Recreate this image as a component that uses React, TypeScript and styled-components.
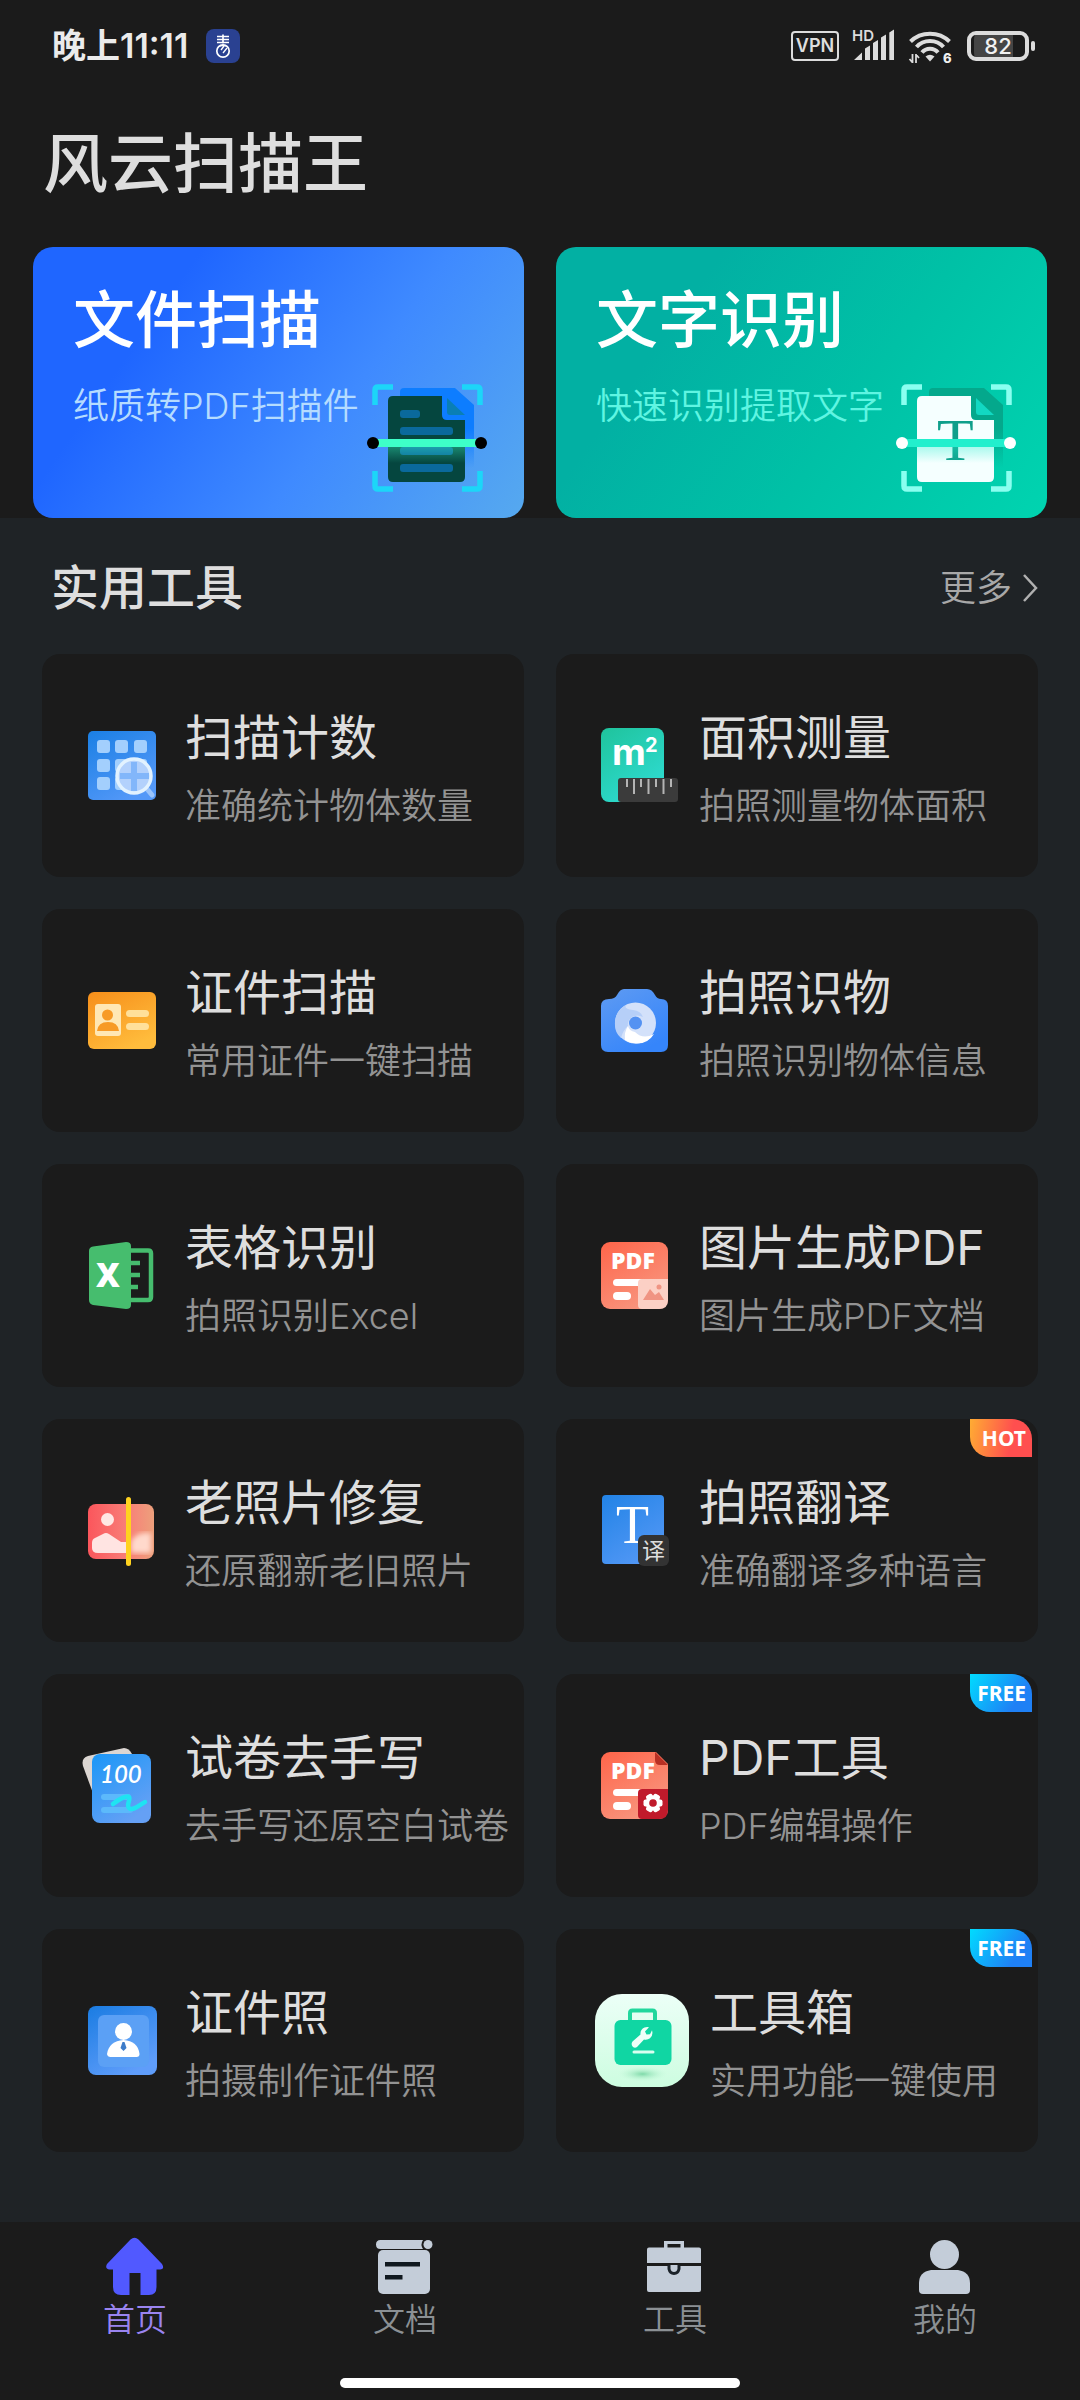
import React from "react";
import styled, { createGlobalStyle } from "styled-components";

const GlobalStyle = createGlobalStyle`
  *, *::before, *::after { box-sizing: border-box; }
  body {
    margin: 0;
    background: #1b1b1b;
    color: #dedede;
    font-family: Inter, "Noto Sans CJK SC", sans-serif;
  }
  a { color: inherit; text-decoration: none; }
  h1, h2, h3, p { margin: 0; font-weight: 400; }
  svg { display: block; flex: none; }
`;

const Page = styled.div`
  display: flex;
  flex-direction: column;
  min-height: 100vh;
`;

/* ---------- status bar ---------- */

const StatusBar = styled.div`
  display: flex;
  align-items: center;
  justify-content: space-between;
  height: 92px;
  padding: 0 45px 0 52px;
`;

const StatusGroup = styled.div<{ $gap: number }>`
  display: flex;
  align-items: center;
  gap: ${(p) => p.$gap}px;
`;

const Clock = styled.span`
  font-size: 34px;
  line-height: 48px;
  font-weight: 600;
  color: #ebebeb;
`;

const VpnTag = styled.span`
  width: 48px;
  height: 30px;
  border: 2px solid #dcdcdc;
  border-radius: 4px;
  font-size: 18px;
  line-height: 26px;
  font-weight: 600;
  text-align: center;
`;

const Battery = styled.span`
  display: flex;
  align-items: center;
  gap: 2px;

  &::after {
    content: "";
    width: 4px;
    height: 10px;
    border-radius: 2px;
    background: #dcdcdc;
  }
`;

const BatteryBody = styled.span`
  width: 62px;
  height: 30px;
  border: 4px solid #dcdcdc;
  border-radius: 9px;
  padding: 0 3px;
  background: linear-gradient(90deg, #454545 82%, #1b1b1b 82%) content-box;
  font-size: 22px;
  line-height: 22px;
  font-weight: 500;
  color: #f2f2f2;
  text-align: center;
`;

/* ---------- header ---------- */

const AppTitle = styled.h1`
  padding: 24px 43px 0;
  font-size: 65px;
  line-height: 96px;
  font-weight: 500;
`;

const HeroRow = styled.div`
  display: grid;
  grid-template-columns: 1fr 1fr;
  gap: 32px;
  padding: 35px 33px 0;
`;

const HeroCard = styled.a<{ $bg: string }>`
  display: grid;
  grid-template-columns: 1fr auto;
  align-content: start;
  height: 271px;
  padding: 28px 30px 26px 40px;
  border-radius: 20px;
  background: ${(p) => p.$bg};
`;

const HeroTitle = styled.h2`
  grid-column: 1 / -1;
  font-size: 62px;
  line-height: 92px;
  font-weight: 500;
  color: #fff;
`;

const HeroSub = styled.p<{ $color: string }>`
  padding-top: 12px;
  font-size: 36px;
  line-height: 54px;
  font-weight: 350;
  white-space: nowrap;
  color: ${(p) => p.$color};
`;

const HeroArt = styled.span`
  padding-top: 17px;
`;

/* ---------- tools ---------- */

const Main = styled.main`
  flex: 1;
  padding: 0 42px 70px;
  background: #1f2326;
`;

const SectionHead = styled.div`
  display: flex;
  align-items: center;
  justify-content: space-between;
  height: 136px;
  padding: 3px 0 0 9px;
`;

const SectionTitle = styled.h2`
  font-size: 48px;
  line-height: 72px;
  font-weight: 500;
`;

const More = styled.a`
  display: flex;
  align-items: center;
  gap: 10px;
  font-size: 36px;
  line-height: 48px;
  font-weight: 350;
  color: #a8a8a8;
`;

const ToolGrid = styled.div`
  display: grid;
  grid-template-columns: 1fr 1fr;
  gap: 32px;
`;

const ToolCard = styled.a<{ $wide?: boolean }>`
  position: relative;
  display: flex;
  align-items: center;
  gap: ${(p) => (p.$wide ? 21 : 10)}px;
  height: 223px;
  padding-left: 38px;
  border-radius: 18px;
  background: #1b1b1b;
  white-space: nowrap;
`;

const ToolText = styled.div`
  display: flex;
  flex-direction: column;
  gap: 8px;
`;

const ToolTitle = styled.h3`
  font-size: 48px;
  line-height: 72px;
`;

const ToolSub = styled.p`
  font-size: 36px;
  line-height: 48px;
  font-weight: 350;
  color: #939393;
`;

const Badge = styled.span<{ $bg: string }>`
  position: absolute;
  top: 0;
  right: 6px;
  width: 62px;
  height: 38px;
  padding-right: 6px;
  border-radius: 0 20px 0 20px;
  background: ${(p) => p.$bg};
  font-family: "Noto Sans", sans-serif;
  font-size: 21px;
  line-height: 38px;
  font-weight: 700;
  text-align: right;
  color: #fff;
`;

/* ---------- bottom navigation ---------- */

const BottomBar = styled.footer`
  display: flex;
  flex-direction: column;
  align-items: center;
  padding: 14px 0 12px;
`;

const TabRow = styled.nav`
  display: grid;
  grid-template-columns: repeat(4, 1fr);
  width: 100%;
`;

const Tab = styled.a<{ $active?: boolean }>`
  display: flex;
  flex-direction: column;
  align-items: center;
  font-size: 32px;
  line-height: 48px;
  font-weight: 350;
  color: ${(p) => (p.$active ? "#9a84f0" : "#8b9094")};
`;

const HomeIndicator = styled.span`
  width: 400px;
  height: 10px;
  margin-top: 34px;
  border-radius: 5px;
  background: #fff;
`;

/* ---------- status icons ---------- */

const AppBadgeIcon = () => (
  <svg width="34" height="34" viewBox="0 0 34 34">
    <rect width="34" height="34" rx="8" fill="#2a4191" />
    <g stroke="#fff" fill="none">
      <path d="M11 7.5h12M11 10.5h12M11 13.5h12M17 5.5v9" strokeWidth="1.7" />
      <circle cx="17" cy="22" r="6.2" strokeWidth="1.7" />
      <path d="M15 21l3-4M17 24l4-5M14 17c3-1 4-1 6 0" strokeWidth="1.3" />
    </g>
  </svg>
);

const SignalIcon = () => (
  <svg width="43" height="46" viewBox="0 -5 43 46" fill="#dcdcdc">
    <text x="0" y="13" fontSize="15" fontWeight="600" fontFamily="Inter, sans-serif">HD</text>
    <path d="M2 32l8-7.500V32zM13 20.500l5-3V32h-5zM21 15l5-3V32h-5zM29 9.500l5-3V32h-5zM37.300 4.500l4.700-3V32h-4.700z" />
  </svg>
);

const WifiIcon = () => (
  <svg width="46" height="46" viewBox="0 -5 46 46">
    <g fill="none" stroke="#dcdcdc" strokeWidth="4">
      <path d="M2.500 13.500C13 3 31 3 41.500 13.500" />
      <path d="M8.500 19C15.500 11 28.500 11 35.500 19" />
      <path d="M14 24.500C18 19.500 26 19.500 30 24.500" />
    </g>
    <path d="M17.500 28.500Q22 25 26.500 28.500L22 33.500z" fill="#dcdcdc" />
    <path d="M4.500 26v9M4.500 34.500L1.500 31M8 35v-9M8 26.500l3 3.500" stroke="#dcdcdc" strokeWidth="1.800" fill="none" />
    <text x="35" y="35" fontSize="13" fontWeight="800" fill="#f0f0f0" fontFamily="Inter, sans-serif">6</text>
  </svg>
);

/* ---------- hero art ---------- */

type ArtProps = {
  id: string;
  shift: number;
  corner: string;
  shadow: string;
  page: string;
  fold: string;
  beam: string;
  dot: string;
  children: React.ReactNode;
};

const ScanArt = ({ id, shift, corner, shadow, page, fold, beam, dot, children }: ArtProps) => (
  <svg width="127" height="109" viewBox="0 0 127 109">
    <defs>
      <linearGradient id={`${id}-shadow`} x1="0" y1="0" x2="0" y2="1">
        <stop offset="0.5" stopColor={shadow} />
        <stop offset="1" stopColor={shadow} stopOpacity="0" />
      </linearGradient>
      <linearGradient id={`${id}-glow`} x1="0" y1="0" x2="0" y2="1">
        <stop offset="0" stopColor={beam} stopOpacity="0.35" />
        <stop offset="1" stopColor={beam} stopOpacity="0" />
      </linearGradient>
    </defs>
    <g transform={`translate(${shift} 0)`}>
      <path
        d="M8 21V6q0-3 3-3h15M95 3h15q3 0 3 3v15M8 87v15q0 3 3 3h15M95 105h15q3 0 3-3V87"
        fill="none"
        stroke={corner}
        strokeWidth="5.500"
      />
      <path d="M37 4H88L107 21V84H33V8q0-4 4-4z" fill={`url(#${id}-shadow)`} />
      <path d="M26 12H75V31q0 5 5 5H98V93q0 5-5 5H26q-5 0-5-5V17q0-5 5-5z" fill={page} />
      <path d="M80 14V28q0 3 3 3H98z" fill={fold} />
      {children}
      <rect x="21" y="63" width="77" height="16" fill={`url(#${id}-glow)`} />
      <rect x="8" y="55" width="104" height="8" fill={beam} />
      <circle cx="6" cy="59" r="6" fill={dot} />
      <circle cx="114" cy="59" r="6" fill={dot} />
    </g>
  </svg>
);

/* ---------- tool icons ---------- */

const Grad = ({ id, from, to }: { id: string; from: string; to: string }) => (
  <linearGradient id={id} x1="0" y1="0" x2="0.6" y2="1">
    <stop offset="0" stopColor={from} />
    <stop offset="1" stopColor={to} />
  </linearGradient>
);

const Icon = ({ children }: { children: React.ReactNode }) => (
  <svg width="95" height="95" viewBox="0 0 95 95" aria-hidden="true">
    {children}
  </svg>
);

const CountIcon = () => (
  <Icon>
    <Grad id="count" from="#1a7fe4" to="#5398f8" />
    <rect x="8" y="13" width="68" height="69" rx="5" fill="url(#count)" />
    <g fill="#a3cffd">
      {[22, 41, 59].map((y) =>
        [17, 35, 54].map((x) => <rect key={`${x}-${y}`} x={x} y={y} width="13" height="13" rx="3" />)
      )}
    </g>
    <path d="M67 71l5 6" stroke="#9ac4fb" strokeWidth="5" strokeLinecap="round" />
    <circle cx="54" cy="58" r="17" fill="#b3d1fc" stroke="#e2f2ff" strokeWidth="3.500" />
    <path d="M51 44h6v11h12v6H57v12h-6V61H40v-6h11z" fill="#82b6fa" />
  </Icon>
);

const AreaIcon = () => (
  <Icon>
    <Grad id="area" from="#1fc39c" to="#2edbd0" />
    <rect x="7" y="10" width="63" height="74" rx="8" fill="url(#area)" />
    <text x="18" y="47" fontSize="37" fontWeight="700" fill="#fff" fontFamily="Inter, sans-serif">m</text>
    <text x="51" y="34" fontSize="20" fontWeight="700" fill="#fff" fontFamily="Inter, sans-serif">2</text>
    <rect x="24" y="60" width="60" height="24" rx="3" fill="#3b3b3b" />
    <path
      d="M33 61v8M40 61v15M47 61v8M54.500 61v15M62 61v8M69.500 61v15M77 61v8"
      stroke="#b4b4b4"
      strokeWidth="2"
    />
  </Icon>
);

const IdCardIcon = () => (
  <Icon>
    <Grad id="idcard" from="#f68e1a" to="#ffbc3c" />
    <rect x="8" y="19" width="68" height="57" rx="6" fill="url(#idcard)" />
    <rect x="15" y="31" width="26" height="32" rx="3" fill="#ffe7b4" />
    <circle cx="27.500" cy="42" r="5.500" fill="#f79a26" />
    <path d="M17 58q1-9 11-9t11 9z" fill="#f79a26" />
    <rect x="46" y="37" width="23" height="7" rx="3.500" fill="#ffe09a" />
    <rect x="46" y="50" width="23" height="7" rx="3.500" fill="#ffe09a" />
  </Icon>
);

const CameraIcon = () => (
  <Icon>
    <Grad id="camera" from="#5f9bf2" to="#3585fb" />
    <path
      d="M15 26q6 0 8-4 3-6 7-6h23q5 0 8 6 2 4 6 4 7 0 7 7v39q0 7-7 7H14q-7 0-7-7V33q0-7 8-7z"
      fill="url(#camera)"
    />
    <circle cx="41.500" cy="50" r="20.500" fill="#d3e1fa" />
    <path d="M21 52A20.500 20.500 0 0 1 33 31.500q-5 4 6 5.500 8 1 10 7-6-3-11 0-5 4-4 9-5 4-7 12Q21 60 21 52z" fill="#b6cff8" />
    <path d="M34 53q1 5 7 6 8 8 19 2-6 10-18 9.500-7-.5-11-3.500-1-8 3-14z" fill="#fff" />
    <circle cx="41.500" cy="50" r="6.500" fill="#5492f2" />
  </Icon>
);

const ExcelIcon = () => (
  <Icon>
    <path d="M50 22.500H68q3 0 3 3V69q0 3-3 3H50" fill="none" stroke="#46bd6e" strokeWidth="4.500" />
    <path d="M51 35h9M51 47h9M51 59h7" stroke="#46bd6e" strokeWidth="4.500" />
    <path d="M13 18.500L46 14q5 0 5 4v59q0 4-5 4l-33-4q-4-1-4-5V23q0-4 4-4.500z" fill="#46bd6e" />
    <text x="16" y="59" fontSize="33" fontWeight="900" fill="#fff" fontFamily="'Noto Sans', sans-serif">X</text>
  </Icon>
);

const PdfBase = ({ id }: { id: string }) => (
  <>
    <Grad id={id} from="#ff654a" to="#f8957e" />
    <rect x="7" y="14" width="67" height="67" rx="9" fill={`url(#${id})`} />
    <rect x="19" y="51" width="32" height="7" rx="3.500" fill="#fff" />
    <rect x="19" y="64" width="18" height="8" rx="4" fill="#fff" />
  </>
);

const PdfLabel = () => (
  <text x="17" y="41" fontSize="23" fontWeight="900" fill="#fff" fontFamily="'Noto Sans', sans-serif">PDF</text>
);

const ImagePdfIcon = () => (
  <Icon>
    <PdfBase id="imgpdf" />
    <PdfLabel />
    <path d="M48 51h26v21q0 9-9 9H48q-4 0-4-4V55q0-4 4-4z" fill="#fcd0c5" />
    <path d="M49 72l7-11 5 6 4-3 5 8z" fill="#f09483" />
    <circle cx="65" cy="59" r="2.500" fill="#f09483" />
  </Icon>
);

const PdfToolIcon = () => (
  <Icon>
    <PdfBase id="pdftool" />
    <path d="M61 13h14v14z" fill="#1b1b1b" />
    <path d="M61 14v8q0 5 5 5h8z" fill="#b93024" />
    <PdfLabel />
    <path d="M48 51h26v21q0 9-9 9H48q-4 0-4-4V55q0-4 4-4z" fill="#c01a2b" />
    <g transform="translate(59 65)" fill="#fff">
      {[0, 60, 120].map((a) => (
        <rect key={a} x="-3.500" y="-9.500" width="7" height="19" rx="2" transform={`rotate(${a + 30})`} />
      ))}
      <circle r="7.500" />
      <circle r="3.800" fill="#c01a2b" />
    </g>
  </Icon>
);

const PhotoIcon = () => (
  <Icon>
    <defs>
      <linearGradient id="photo">
        <stop offset="0" stopColor="#fb565c" />
        <stop offset="0.6" stopColor="#f87f78" />
        <stop offset="1" stopColor="#eda07c" />
      </linearGradient>
      <filter id="photo-soft">
        <feGaussianBlur stdDeviation="2.500" />
      </filter>
    </defs>
    <rect x="8" y="21" width="66" height="55" rx="8" fill="url(#photo)" />
    <circle cx="27.500" cy="36.500" r="6.500" fill="#ffe8e4" />
    <path d="M12 60q0-4 3-5l8-4q3-2 6 0l12 8h7v11H18q-6 0-6-5z" fill="#ffe4e2" />
    <path d="M51 58q6-8 14-8h6v20H51z" fill="#ffd9cc" filter="url(#photo-soft)" />
    <rect x="46" y="14" width="5" height="69" rx="2.500" fill="#ffd21f" />
  </Icon>
);

const TranslateIcon = () => (
  <Icon>
    <Grad id="translate" from="#2283e6" to="#5197f5" />
    <rect x="8" y="12" width="62" height="69" rx="4" fill="url(#translate)" />
    <text x="22" y="60" fontSize="54" fill="#fff" fontFamily="'Liberation Serif', serif">T</text>
    <rect x="44" y="52" width="31" height="31" rx="6" fill="#333" />
    <text x="48" y="76" fontSize="23" fill="#ddd" fontFamily="'Noto Sans CJK SC', sans-serif">译</text>
  </Icon>
);

const ExamIcon = () => (
  <Icon>
    <Grad id="exam" from="#1a97f7" to="#65a0f5" />
    <path d="M8 18L44 10q5 0 8 6L20 68l-3-2L3 28q-2-8 5-10z" fill="#dcd6d2" />
    <rect x="12" y="16" width="59" height="69" rx="8" fill="url(#exam)" />
    <text x="20" y="45" fontSize="24" fontStyle="italic" fontWeight="600" fill="#fff" fontFamily="Lato, sans-serif">100</text>
    <rect x="21" y="56" width="30" height="6" rx="3" fill="#5cb9fb" />
    <rect x="21" y="69" width="32" height="6" rx="3" fill="#5cb9fb" />
    <path d="M33 66c6-5 14-9 16-7s-3 8 0 11 10-2 16-6" stroke="#1fe3f2" strokeWidth="4.500" strokeLinecap="round" fill="none" />
  </Icon>
);

const IdPhotoIcon = () => (
  <Icon>
    <Grad id="idphoto" from="#1a7ce2" to="#5f9dfa" />
    <rect x="8" y="13" width="69" height="69" rx="8" fill="url(#idphoto)" />
    <rect x="18" y="22" width="51" height="52" rx="6" fill="#5ba0f5" />
    <circle cx="43.500" cy="38.500" r="8.500" fill="#fff" />
    <path d="M27 61q2-13 16.500-14Q58 48 59.500 61q0 3-3 3h-26q-3 0-3.500-3z" fill="#fff" />
    <path d="M42.500 49h2l2 6-3 3-3-3z" fill="#3d7cc9" />
  </Icon>
);

const ToolboxIcon = () => (
  <Icon>
    <defs>
      <linearGradient id="box" x1="0" y1="0" x2="0" y2="1">
        <stop offset="0" stopColor="#ecfff7" />
        <stop offset="1" stopColor="#cdfde0" />
      </linearGradient>
      <radialGradient id="box-shade">
        <stop offset="0" stopColor="#7fd9a9" />
        <stop offset="1" stopColor="#cdfde0" stopOpacity="0" />
      </radialGradient>
    </defs>
    <rect x="1" y="1" width="94" height="93" rx="27" fill="url(#box)" />
    <ellipse cx="48.500" cy="81" rx="26" ry="8" fill="url(#box-shade)" />
    <path d="M36 29V20q0-2.500 2.500-2.500h20q2.500 0 2.500 2.500v9" fill="none" stroke="#22d79d" strokeWidth="4" />
    <rect x="20.500" y="27" width="57" height="45" rx="6" fill="#10d6a3" />
    <path
      d="M38.500 48.500l8-7q-.5-5 4-7 2.500-1 4.500-.3l-4 4.300 1.500 3 3.500-.3 2-4q1.500 5-2 8-2.500 2-6 1.300l-7 7.500q-2 1.500-4 0-2.500-2.500-.5-5.500z"
      fill="#effff8"
    />
    <path d="M40 59h19" stroke="#d8fff0" strokeWidth="3" strokeLinecap="round" />
  </Icon>
);

/* ---------- tab icons ---------- */

const TabIcon = ({ children, color }: { children: React.ReactNode; color: string }) => (
  <svg width="60" height="60" viewBox="0 0 60 60" fill={color} aria-hidden="true">
    {children}
  </svg>
);

const STEEL = "#c4cdd9";

const HomeTabIcon = () => (
  <TabIcon color="#5159ff">
    <path d="M25.500 3.500q4-3.500 8 0L57 28q3 5.500-2 5.500h-3.500V51q0 8-7.500 8h-8.500V37H24.500V59H16q-8 0-8-8V33.500H4.500q-5-.5-2.500-5.500z" />
  </TabIcon>
);

const DocTabIcon = () => (
  <TabIcon color={STEEL}>
    <path d="M5.500 4H48q-3 4.500 0 9H5.500q-4.500 0-4.500-4.500T5.500 4z" />
    <circle cx="53" cy="8.500" r="4.500" />
    <rect x="3" y="14" width="52" height="44" rx="5" />
    <path d="M10 26h35v4.500H10zM10 39h17.500v4.500H10z" fill="#10181f" />
  </TabIcon>
);

const CaseTabIcon = () => (
  <TabIcon color={STEEL}>
    <path d="M19 12V5h20v7h-3.500V8h-13v4z" />
    <path d="M4 11.500h50q2 0 2 2V27H2V13.500q0-2 2-2zM2 30h54v24q0 2-2 2H4q-2 0-2-2z" />
    <path d="M24 29v4q1 4.500 5 4.500t5-4.500v-4" fill={STEEL} stroke="#1b2229" strokeWidth="3" />
  </TabIcon>
);

const UserTabIcon = () => (
  <TabIcon color={STEEL}>
    <circle cx="29.500" cy="18.500" r="14.500" />
    <path d="M16 34h27q12 2 12 13v7q0 4-4 4H8q-4 0-4-4v-7q0-11 12-13z" />
  </TabIcon>
);

/* ---------- content ---------- */

const HOT = { label: "HOT", bg: "linear-gradient(100deg, #ffac33, #ff4f4f 65%)" };
const FREE = { label: "FREE", bg: "linear-gradient(125deg, #00dcff, #1f80f5 75%)" };

const tools = [
  { title: "扫描计数", sub: "准确统计物体数量", Art: CountIcon },
  { title: "面积测量", sub: "拍照测量物体面积", Art: AreaIcon },
  { title: "证件扫描", sub: "常用证件一键扫描", Art: IdCardIcon },
  { title: "拍照识物", sub: "拍照识别物体信息", Art: CameraIcon },
  { title: "表格识别", sub: "拍照识别Excel", Art: ExcelIcon },
  { title: "图片生成PDF", sub: "图片生成PDF文档", Art: ImagePdfIcon },
  { title: "老照片修复", sub: "还原翻新老旧照片", Art: PhotoIcon },
  { title: "拍照翻译", sub: "准确翻译多种语言", Art: TranslateIcon, badge: HOT },
  { title: "试卷去手写", sub: "去手写还原空白试卷", Art: ExamIcon },
  { title: "PDF工具", sub: "PDF编辑操作", Art: PdfToolIcon, badge: FREE },
  { title: "证件照", sub: "拍摄制作证件照", Art: IdPhotoIcon },
  { title: "工具箱", sub: "实用功能一键使用", Art: ToolboxIcon, badge: FREE, wide: true },
];

const tabs = [
  { label: "首页", Art: HomeTabIcon, active: true },
  { label: "文档", Art: DocTabIcon },
  { label: "工具", Art: CaseTabIcon },
  { label: "我的", Art: UserTabIcon },
];

export default function App() {
  return (
    <Page>
      <GlobalStyle />
      <StatusBar>
        <StatusGroup $gap={18}>
          <Clock>晚上11:11</Clock>
          <AppBadgeIcon />
        </StatusGroup>
        <StatusGroup $gap={13}>
          <VpnTag>VPN</VpnTag>
          <SignalIcon />
          <WifiIcon />
          <Battery>
            <BatteryBody>82</BatteryBody>
          </Battery>
        </StatusGroup>
      </StatusBar>

      <header>
        <AppTitle>风云扫描王</AppTitle>
        <HeroRow>
          <HeroCard
            href="#scan"
            $bg="linear-gradient(125deg, #1f66ff 25%, #3f8aff 62%, #56a9ef)"
          >
            <HeroTitle>文件扫描</HeroTitle>
            <HeroSub $color="#b5dcff">纸质转PDF扫描件</HeroSub>
            <HeroArt>
              <ScanArt
                id="doc"
                shift={0}
                corner="#1cd6f8"
                shadow="#0d7dff"
                page="#05463f"
                fold="#0a7fb5"
                beam="#3effc8"
                dot="#000"
              >
                <g fill="#0a699c">
                  <rect x="33" y="26" width="20" height="8" rx="3" />
                  <rect x="33" y="43" width="53" height="8" rx="3" />
                  <rect x="33" y="63" width="53" height="8" rx="3" />
                  <rect x="33" y="80" width="53" height="8" rx="3" />
                </g>
              </ScanArt>
            </HeroArt>
          </HeroCard>
          <HeroCard
            href="#ocr"
            $bg="linear-gradient(125deg, #02b0a3 25%, #00c1a6 60%, #00d4b0)"
          >
            <HeroTitle>文字识别</HeroTitle>
            <HeroSub $color="#5ff5e2">快速识别提取文字</HeroSub>
            <HeroArt>
              <ScanArt
                id="ocr"
                shift={6}
                corner="#8afff0"
                shadow="#04a88c"
                page="#f5ffff"
                fold="#12d8c2"
                beam="#22efcd"
                dot="#fff"
              >
                <text x="41" y="76" fontSize="60" fill="#0f9f8b" fontFamily="'Liberation Serif', serif">T</text>
              </ScanArt>
            </HeroArt>
          </HeroCard>
        </HeroRow>
      </header>

      <Main>
        <SectionHead>
          <SectionTitle>实用工具</SectionTitle>
          <More href="#more">
            更多
            <svg width="16" height="28" viewBox="0 0 16 28" fill="none" stroke="#b0b0b0" strokeWidth="2.500">
              <path d="M2 1l12 13L2 27" />
            </svg>
          </More>
        </SectionHead>
        <ToolGrid>
          {tools.map(({ title, sub, Art, badge, wide }) => (
            <ToolCard key={title} href="#tool" $wide={wide}>
              <Art />
              <ToolText>
                <ToolTitle>{title}</ToolTitle>
                <ToolSub>{sub}</ToolSub>
              </ToolText>
              {badge && <Badge $bg={badge.bg}>{badge.label}</Badge>}
            </ToolCard>
          ))}
        </ToolGrid>
      </Main>

      <BottomBar>
        <TabRow>
          {tabs.map(({ label, Art, active }) => (
            <Tab key={label} href="#tab" $active={active}>
              <Art />
              {label}
            </Tab>
          ))}
        </TabRow>
        <HomeIndicator />
      </BottomBar>
    </Page>
  );
}
